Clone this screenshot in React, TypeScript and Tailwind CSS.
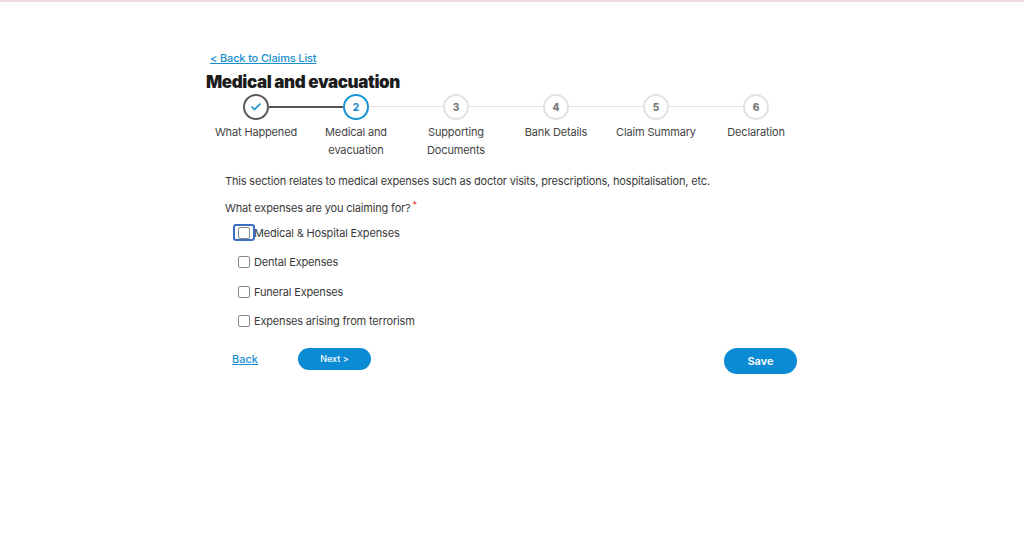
import { Check } from 'lucide-react'

const steps = [
  { n: '1', label: ['What Happened'], state: 'done' },
  { n: '2', label: ['Medical and', 'evacuation'], state: 'active' },
  { n: '3', label: ['Supporting', 'Documents'], state: 'todo' },
  { n: '4', label: ['Bank Details'], state: 'todo' },
  { n: '5', label: ['Claim Summary'], state: 'todo' },
  { n: '6', label: ['Declaration'], state: 'todo' },
]

const options = [
  'Medical & Hospital Expenses',
  'Dental Expenses',
  'Funeral Expenses',
  'Expenses arising from terrorism',
]

function Stepper() {
  return (
    <div className="flex w-[600px]">
      {steps.map((s, i) => (
        <div key={s.n} className="relative flex w-[100px] flex-col items-center">
          {i < steps.length - 1 && (
            <div
              className={
                'absolute left-[63px] top-[12px] w-[74px] ' +
                (s.state === 'done' ? 'h-[1.5px] bg-[#555]' : 'h-px bg-[#e3e3e3]')
              }
            />
          )}
          {s.state === 'done' && (
            <div className="flex h-[26px] w-[26px] items-center justify-center rounded-full border-2 border-[#5a5a5a] bg-white">
              <Check size={12} strokeWidth={3.5} className="text-[#1a8fd0]" />
            </div>
          )}
          {s.state === 'active' && (
            <div className="flex h-[26px] w-[26px] items-center justify-center rounded-full border-2 border-[#1a93d3] bg-white text-[10px] font-extrabold text-[#1a8fd0]">
              {s.n}
            </div>
          )}
          {s.state === 'todo' && (
            <div className="flex h-[26px] w-[26px] items-center justify-center rounded-full border-2 border-[#e2e2e2] bg-white text-[10px] font-extrabold text-[#777]">
              {s.n}
            </div>
          )}
          <div className="mt-[3px] text-center text-[11px] leading-[18px] tracking-[-0.15px] text-[#444]">
            {s.label.map((l) => (
              <div key={l}>{l}</div>
            ))}
          </div>
        </div>
      ))}
    </div>
  )
}

export default function App() {
  return (
    <div
      className="h-[558px] w-[1024px] overflow-hidden border-t-2 border-[#f0d9e1] bg-white"
      style={{ fontFamily: 'Inter, "Noto Sans", sans-serif' }}
    >
      <div className="ml-[206px] pt-[42px]">
        <a href="#" className="ml-[4px] text-[11px] font-medium leading-[16px] tracking-[-0.15px] text-[#1a8fd0] underline">
          &lt; Back to Claims List
        </a>
        <h1 className="mt-[3px] text-[17px] font-black leading-[22px] tracking-[-0.4px] text-[#1d1d1d]">
          Medical and evacuation
        </h1>
        <div className="mt-px">
          <Stepper />
        </div>

        <div className="ml-[19px] mt-[14px] text-[11px] tracking-[-0.17px] text-[#3a3a3a]">
          <p className="leading-[16px]">
            This section relates to medical expenses such as doctor visits, prescriptions, hospitalisation, etc.
          </p>
          <p className="mt-[11px] leading-[16px]">
            What expenses are you claiming for?
            <span className="relative top-[-4px] ml-[2px] text-[9px] text-[#e0262d]">*</span>
          </p>
          <div className="ml-[13px] mt-[8px] flex flex-col gap-[13.4px]">
            {options.map((o, i) => (
              <label key={o} className="flex h-[16px] items-center">
                <span className="relative h-[12px] w-[12px] rounded-[2px] border border-[#8a8a8a] bg-white">
                  {i === 0 && (
                    <span className="absolute left-[-6px] top-[-4px] h-[17px] w-[22px] rounded-[3px] border-2 border-[#3b6fc2]" />
                  )}
                </span>
                <span className="ml-[4px]">{o}</span>
              </label>
            ))}
          </div>
        </div>

        <div className="mt-[15px] flex w-[591px] items-center">
          <a href="#" className="ml-[26px] text-[11px] font-medium text-[#1a8fd0] underline">
            Back
          </a>
          <button className="ml-[40px] h-[22px] w-[73px] rounded-full bg-[#0b8bd3] text-[9px] font-medium text-white">
            Next &gt;
          </button>
          <button className="ml-auto mt-[4px] h-[26px] w-[73px] rounded-full bg-[#0b8bd3] text-[11px] font-semibold text-white">
            Save
          </button>
        </div>
      </div>
    </div>
  )
}
